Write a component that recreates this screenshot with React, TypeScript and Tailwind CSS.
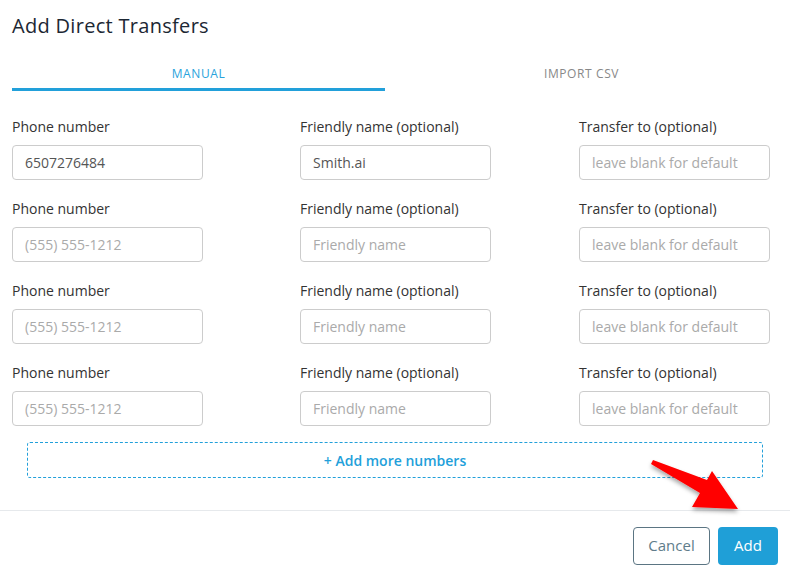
import React from 'react';

type Row = {
  phone?: string;
  name?: string;
};

const rows: Row[] = [
  { phone: '6507276484', name: 'Smith.ai' },
  {},
  {},
  {},
];

function Field({ label, value, placeholder }: { label: string; value?: string; placeholder: string }) {
  return (
    <div className="flex flex-col">
      <label className="text-[14px] leading-[20px] text-[#333]">{label}</label>
      <input
        readOnly
        value={value ?? ''}
        placeholder={placeholder}
        className="mt-2 h-[35px] w-[191px] rounded-[4px] border border-[#ccc] px-3 text-[14px] text-[#555] outline-none placeholder:text-[#aaa]"
      />
    </div>
  );
}

export default function App() {
  return (
    <div
      className="relative h-[576px] w-[790px] overflow-hidden bg-white"
      style={{ fontFamily: '"Open Sans", "Noto Sans", sans-serif' }}
    >
      <h1 className="px-3 pt-3 text-[20px] leading-[28px] font-medium tracking-[0.3px] text-[#1c2733]">
        Add Direct Transfers
      </h1>

      <div className="mt-4 flex px-3">
        <div className="flex h-[35px] w-[373px] items-center justify-center border-b-[3px] border-[#22a0da] pt-[3px] text-[12px] font-medium tracking-[0.6px] text-[#29a3dc]">
          MANUAL
        </div>
        <div className="flex h-[35px] flex-1 items-center justify-center text-[12px] tracking-[0.6px] text-[#888]">
          IMPORT CSV
        </div>
      </div>

      <div className="mt-[26px] flex flex-col gap-[19px] px-3">
        {rows.map((row, i) => (
          <div key={i} className="grid grid-cols-[288px_279px_191px]">
            <Field label="Phone number" value={row.phone} placeholder="(555) 555-1212" />
            <Field label="Friendly name (optional)" value={row.name} placeholder="Friendly name" />
            <Field label="Transfer to (optional)" placeholder="leave blank for default" />
          </div>
        ))}
      </div>

      <div className="mt-4 ml-[27px] flex h-[36px] w-[736px] items-center justify-center rounded-[3px] border border-dashed border-[#22a0da] text-[14px] font-semibold text-[#22a0da]">
        + Add more numbers
      </div>

      <div className="mt-8 border-t border-[#e6e9ec]" />

      <div className="mt-4 flex justify-end gap-2 px-3">
        <button className="h-[38px] w-[77px] rounded-[4px] border border-[#5b7583] pb-px text-[15px] text-[#607d8b]">
          Cancel
        </button>
        <button className="h-[38px] w-[60px] rounded-[4px] bg-[#1f9fd7] pb-px text-[15px] text-white">
          Add
        </button>
      </div>

      <svg className="pointer-events-none absolute left-0 top-0" width="790" height="576">
        <defs>
          <filter id="shadow" x="-20%" y="-20%" width="140%" height="160%">
            <feDropShadow dx="0" dy="3" stdDeviation="2" floodColor="#000" floodOpacity="0.35" />
          </filter>
        </defs>
        <polygon
          points="653,460 707,480 712,471 738,509 692,507 700,493 651,464"
          fill="#ff0000"
          filter="url(#shadow)"
        />
      </svg>
    </div>
  );
}
